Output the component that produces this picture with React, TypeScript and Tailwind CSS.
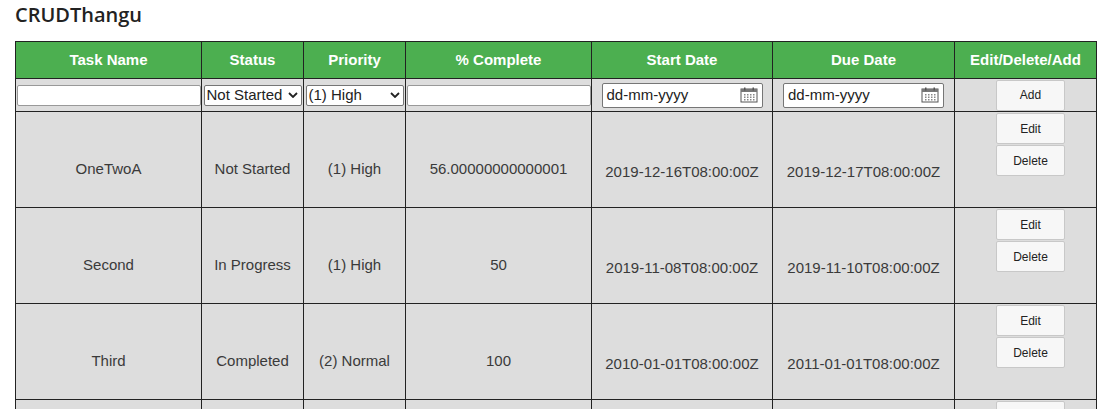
import React from "react";

const cols = [186, 102, 102, 186, 181, 182, 142];
const rows = [
  ["OneTwoA", "Not Started", "(1) High", "56.00000000000001", "2019-12-16T08:00:00Z", "2019-12-17T08:00:00Z"],
  ["Second", "In Progress", "(1) High", "50", "2019-11-08T08:00:00Z", "2019-11-10T08:00:00Z"],
  ["Third", "Completed", "(2) Normal", "100", "2010-01-01T08:00:00Z", "2011-01-01T08:00:00Z"],
  ["", "", "", "", "", ""],
];

const Btn = ({ children }: { children: React.ReactNode }) => (
  <button className="w-[69px] h-[31px] bg-[#f7f7f7] border border-[#c8c8c8] rounded-[2px] text-[12px] text-[#222] block mx-auto">
    {children}
  </button>
);

const Cal = () => (
  <svg width="18" height="16" viewBox="0 0 18 16" className="shrink-0">
    <rect x="1" y="2" width="16" height="13" fill="#fff" stroke="#555" />
    <rect x="1" y="2" width="16" height="3" fill="#777" />
    <rect x="4" y="0.5" width="1.5" height="3" fill="#555" />
    <rect x="12.5" y="0.5" width="1.5" height="3" fill="#555" />
    {[0, 1, 2, 3].map((i) => [0, 1, 2].map((j) => (
      <rect key={i + "-" + j} x={4 + i * 3} y={7 + j * 2.5} width="1.5" height="1.5" fill="#888" />
    )))}
  </svg>
);

const DateInput = () => (
  <div className="mx-auto w-[161px] h-[25px] border border-[#767676] rounded-[2px] bg-white flex items-center justify-between px-[4px] text-[15px] text-[#222]">
    <span>dd-mm-yyyy</span>
    <Cal />
  </div>
);

const Select = ({ w, label }: { w: number; label: string }) => (
  <div className="h-[21px] border border-[#767676] rounded-[2px] bg-white flex items-center justify-between pl-[2px] pr-[3px] text-[15px] text-[#222] mx-auto" style={{ width: w }}>
    <span>{label}</span>
    <svg width="10" height="6" viewBox="0 0 10 6"><path d="M1 1l4 4 4-4" stroke="#222" strokeWidth="1.8" fill="none" /></svg>
  </div>
);

export default function App() {
  return (
    <div className="w-[1108px] h-[409px] overflow-hidden bg-white px-[15px] pt-[1px]" style={{ fontFamily: "'Liberation Sans', Arial, sans-serif" }}>
      <h1 className="text-[20px] font-semibold text-[#222] leading-[28px] h-[40px]" style={{ fontFamily: "'Open Sans', sans-serif" }}>CRUDThangu</h1>
      <table className="border-collapse table-fixed w-[1082px] text-[15px] text-[#3a3a3a]">
        <colgroup>{cols.map((w, i) => <col key={i} style={{ width: w }} />)}</colgroup>
        <thead>
          <tr className="h-[37px] bg-[#4caf50] text-white">
            {["Task Name", "Status", "Priority", "% Complete", "Start Date", "Due Date", "Edit/Delete/Add"].map((h) => (
              <th key={h} className="border border-[#222] font-bold text-[15px]">{h}</th>
            ))}
          </tr>
        </thead>
        <tbody>
          <tr className="h-[33px] bg-[#ddd]">
            <td className="border border-[#222] p-0"><div className="mx-auto w-[184px] h-[21px] bg-white border border-[#999] rounded-[2px]" /></td>
            <td className="border border-[#222] p-0"><Select w={98} label="Not Started" /></td>
            <td className="border border-[#222] p-0"><Select w={98} label="(1) High" /></td>
            <td className="border border-[#222] p-0"><div className="mx-auto w-[184px] h-[21px] bg-white border border-[#999] rounded-[2px]" /></td>
            <td className="border border-[#222] p-0"><DateInput /></td>
            <td className="border border-[#222] p-0"><DateInput /></td>
            <td className="border border-[#222] p-0 pl-[10px]"><Btn>Add</Btn></td>
          </tr>
          {rows.map((r, k) => (
            <tr key={k} className="h-[96px] bg-[#ddd]">
              {r.slice(0, 4).map((c, i) => (
                <td key={i} className="border border-[#222] text-center pt-[20px]">{c}</td>
              ))}
              {r.slice(4).map((c, i) => (
                <td key={i} className="border border-[#222] text-center pt-[26px]">{c}</td>
              ))}
              <td className="border border-[#222] align-top pt-[1px] pl-[10px]">
                <Btn>Edit</Btn>
                <div className="h-[1px]" />
                <Btn>Delete</Btn>
              </td>
            </tr>
          ))}
        </tbody>
      </table>
    </div>
  );
}
